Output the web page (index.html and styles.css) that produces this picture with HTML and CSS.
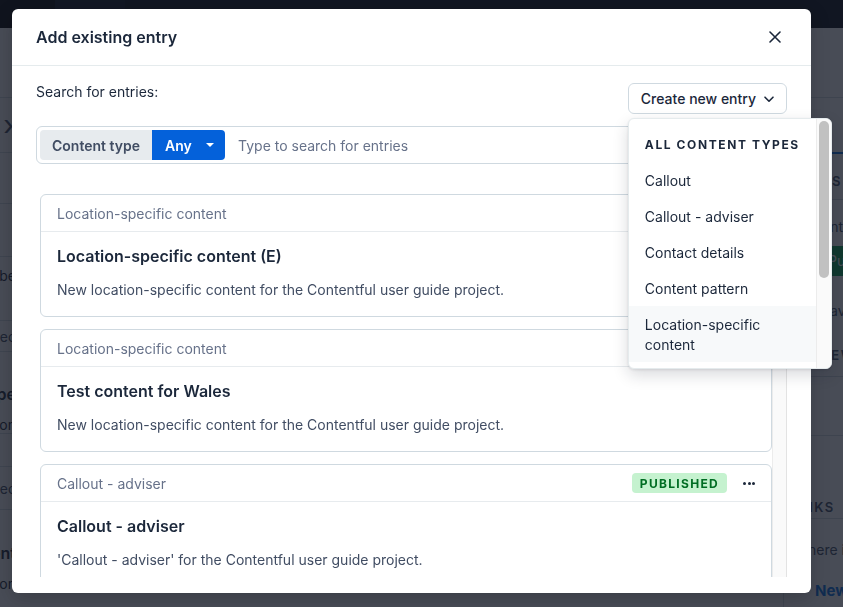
FILE: index.html
```html
<!DOCTYPE html>
<html lang="en">
<head>
<meta charset="utf-8">
<title>Add existing entry</title>
<link rel="stylesheet" href="styles.css">
</head>
<body>
<div class="page">
  <header class="topnav">
    <div class="nav-brand"></div>
    <div class="nav-section"></div>
    <div class="nav-rest"></div>
  </header>
  <div class="workspace">
    <aside class="bg-left">
      <div class="bg-row h70"></div>
      <div class="bg-row h55 center"><span class="chev">&#8250;</span></div>
      <div class="bg-row h51"></div>
      <div class="bg-row h53"></div>
      <div class="bg-row h64 top"><span>Describe</span></div>
      <div class="bg-row h31 mid muted"><span>Location-spec</span></div>
      <div class="bg-row h82 stack"><span class="strong">Location-spe</span><span>Common</span></div>
      <div class="bg-row h33"></div>
      <div class="bg-row h43 mid muted"><span>Location-spec</span></div>
      <div class="bg-row h82 stack stack2"><span class="strong">Content</span><span>Common</span></div>
    </aside>
    <main class="bg-main"></main>
    <aside class="bg-right">
      <div class="side-row r70"></div>
      <div class="side-row r56 tabs"></div>
      <div class="side-row r46 head end"><span>STATUS</span></div>
      <div class="side-block status">
        <span class="side-text end-text">Current</span>
        <span class="side-green">Publish</span>
        <span class="side-text saved">Last saved</span>
      </div>
      <div class="side-row r44 head preview"><span>PREVIEW</span></div>
      <div class="side-row r59"></div>
      <div class="side-row r83 head links"><span>LINKS</span></div>
      <div class="side-block info">
        <span class="side-text there">There is</span>
        <span class="side-link">New</span>
      </div>
    </aside>
  </div>
</div>

<div class="overlay">
  <div class="modal" role="dialog" aria-label="Add existing entry">
    <div class="modal-header">
      <h1 class="modal-title">Add existing entry</h1>
      <button class="close-btn" aria-label="Close">
        <svg width="12" height="12" viewBox="0 0 12 12"><path d="M1 1L11 11M11 1L1 11" stroke="#1b273a" stroke-width="1.6" stroke-linecap="round"/></svg>
      </button>
    </div>
    <div class="modal-body">
      <div class="toolbar">
        <span class="search-label">Search for entries:</span>
        <div class="create-wrap">
          <button class="create-btn">Create new entry
            <svg width="12" height="12" viewBox="0 0 12 12"><path d="M2 4.2L6 8.2L10 4.2" fill="none" stroke="#1b273a" stroke-width="1.6" stroke-linecap="round" stroke-linejoin="round"/></svg>
          </button>
          <div class="dropdown">
            <div class="dropdown-list">
              <div class="dropdown-head">ALL CONTENT TYPES</div>
              <div class="dropdown-item">Callout</div>
              <div class="dropdown-item">Callout - adviser</div>
              <div class="dropdown-item">Contact details</div>
              <div class="dropdown-item">Content pattern</div>
              <div class="dropdown-item active">Location-specific content</div>
              <div class="dropdown-item">Page</div>
              <div class="dropdown-item">Quote</div>
            </div>
            <div class="track dropdown-track"><div class="thumb dropdown-thumb"></div></div>
          </div>
        </div>
      </div>

      <div class="search">
        <span class="ct-label">Content type</span>
        <span class="ct-any">Any <span class="caret"></span></span>
        <span class="placeholder">Type to search for entries</span>
      </div>

      <div class="list-frame">
        <div class="list">
          <div class="card">
            <div class="card-head"><span>Location-specific content</span><span class="badge">PUBLISHED</span><span class="dots"><i></i><i></i><i></i></span></div>
            <div class="card-body">
              <div class="card-title">Location-specific content (E)</div>
              <div class="card-desc">New location-specific content for the Contentful user guide project.</div>
            </div>
          </div>
          <div class="card">
            <div class="card-head"><span>Location-specific content</span><span class="badge">PUBLISHED</span><span class="dots"><i></i><i></i><i></i></span></div>
            <div class="card-body">
              <div class="card-title">Test content for Wales</div>
              <div class="card-desc">New location-specific content for the Contentful user guide project.</div>
            </div>
          </div>
          <div class="card">
            <div class="card-head"><span>Callout - adviser</span><span class="badge">PUBLISHED</span><span class="dots"><i></i><i></i><i></i></span></div>
            <div class="card-body">
              <div class="card-title">Callout - adviser</div>
              <div class="card-desc">'Callout - adviser' for the Contentful user guide project.</div>
            </div>
          </div>
        </div>
        <div class="track list-track"><div class="thumb list-thumb"></div></div>
      </div>
    </div>
  </div>
</div>
</body>
</html>
```

FILE: styles.css
```css
* { box-sizing: border-box; margin: 0; padding: 0; }
html, body { width: 100%; height: 100%; }
body {
  font-family: Inter, "Noto Sans", "Liberation Sans", sans-serif;
  color: #1b273a;
  background: #ffffff;
  overflow: hidden;
}
button { font-family: inherit; background: none; border: none; cursor: pointer; color: inherit; }

/* ---------- background page ---------- */
.page { height: 607px; display: flex; flex-direction: column; }
.topnav { height: 28px; display: flex; background: #050a12; flex: none; }
.nav-brand { width: 55px; background: #000000; }
.nav-section { width: 70px; background: #0a121c; }
.nav-rest { flex: 1; }
.workspace { flex: 1; display: flex; min-height: 0; }

.bg-left { width: 16px; overflow: hidden; display: flex; flex-direction: column; flex: none; }
.bg-row {
  display: flex; justify-content: flex-end; white-space: nowrap;
  border-bottom: 1px solid #d3dce0; font-size: 14px; color: #1b273a; flex: none;
}
.bg-row.center { align-items: center; }
.bg-row.top { padding-top: 10px; }
.bg-row.mid { align-items: center; }
.bg-row.muted { color: #414d63; }
.bg-row.stack { flex-direction: column; align-items: flex-end; padding-top: 16px; gap: 12px; }
.bg-row.stack2 { padding-top: 14px; border-bottom: none; }
.bg-row .strong { font-weight: 600; font-size: 16px; }
.chev { font-size: 28px; color: #414d63; line-height: 1; margin-right: 2px; }
.h70 { height: 70px; } .h55 { height: 55px; } .h51 { height: 51px; } .h53 { height: 53px; }
.h64 { height: 64px; } .h31 { height: 31px; } .h82 { height: 82px; } .h33 { height: 33px; } .h43 { height: 43px; }

.bg-main { flex: 1; }

.bg-right {
  width: 60px; flex: none; overflow: hidden; border-left: 1px solid #d3dce0;
  display: flex; flex-direction: column; white-space: nowrap;
}
.side-row { flex: none; border-bottom: 1px solid #d3dce0; display: flex; align-items: center; }
.r70 { height: 70px; } .r56 { height: 56px; } .r46 { height: 46px; } .r44 { height: 44px; } .r59 { height: 59px; } .r83 { height: 83px; }
.side-row.tabs { border-bottom: 2px solid #036fe3; }
.side-row.head span { font-size: 13px; font-weight: 600; letter-spacing: 1.5px; color: #414d63; }
.side-row.end { justify-content: flex-end; align-items: flex-end; padding: 0 1px 10px 0; }
.side-row.preview { padding-left: 2px; }
.side-row.links { align-items: flex-end; padding: 0 0 3px 5px; }
.side-block { display: flex; flex-direction: column; }
.side-block.status { padding: 17px 0 12px 0; }
.side-text { font-size: 14px; line-height: 20px; color: #414d63; }
.end-text { align-self: flex-end; }
.side-green { display: block; height: 30px; margin: 9px 0 0 34px; background: #00a54d; color: #ffffff; font-size: 14px; line-height: 30px; padding-left: 10px; }
.saved { margin: 25px 0 0 7px; }
.side-block.info { padding: 21px 0 0 0; }
.there { margin-left: 15px; }
.side-link { font-size: 15px; font-weight: 700; line-height: 20px; color: #036fe3; margin: 21px 0 0 31px; }

/* ---------- overlay + modal ---------- */
.overlay {
  position: fixed; inset: 0;
  background: rgba(20, 26, 38, 0.78);
  padding: 9px 0 0 12px;
}
.modal {
  width: 799px; height: 584px; background: #ffffff; border-radius: 6px;
  display: flex; flex-direction: column;
  box-shadow: 0 6px 20px rgba(0, 0, 0, 0.2);
}
.modal-header {
  height: 57px; flex: none; display: flex; align-items: center; justify-content: space-between;
  padding: 0 26px 0 24px; border-bottom: 1px solid #e5ebed;
}
.modal-title { font-size: 16px; font-weight: 600; color: #1b273a; line-height: 24px; }
.close-btn { width: 20px; height: 20px; display: flex; align-items: center; justify-content: center; }

.modal-body { flex: 1; min-height: 0; display: flex; flex-direction: column; padding: 16px 24px 16px 24px; }
.toolbar { display: flex; justify-content: space-between; align-items: flex-start; height: 32px; flex: none; }
.search-label { font-size: 14px; line-height: 20px; color: #1b273a; }

.create-wrap { position: relative; margin-top: 1px; }
.create-btn {
  height: 31px; padding: 0 11px 0 12px; border: 1px solid #cfd9e0; border-radius: 6px;
  display: flex; align-items: center; gap: 7px; font-size: 14px; font-weight: 500; color: #1b273a;
  background: #ffffff;
}

/* dropdown menu over the list */
.dropdown {
  position: absolute; top: 35px; left: 0; width: 204px; height: 251px; z-index: 5;
  display: flex;
  background: #ffffff; border: 1px solid #e5ebed; border-radius: 6px;
  box-shadow: 0 6px 16px rgba(17, 27, 43, 0.16), 0 1px 3px rgba(17, 27, 43, 0.1);
  overflow: hidden;
}
.dropdown-list { flex: 1; min-width: 0; overflow: hidden; padding-top: 7px; }
.dropdown-head {
  height: 36px; display: flex; align-items: center; padding: 0 16px;
  font-size: 12px; font-weight: 700; letter-spacing: 1.6px; color: #1b273a;
}
.dropdown-item { padding: 9px 16px 7px; font-size: 14px; line-height: 20px; color: #1b273a; }
.dropdown-item.active { background: #f7f9fa; }

/* scrollbars */
.track { width: 15px; flex: none; background: #fafafa; border-left: 1px solid #ececec; padding: 2px 2px 0 2px; }
.thumb { background: #c1c1c1; border-radius: 5px; }
.dropdown-thumb { height: 157px; }
.list-track { border-right: 1px solid #e3e3e3; }
.list-thumb { height: 150px; }

.search {
  margin-top: 12px; height: 38px; flex: none; display: flex; align-items: center;
  border: 1px solid #cfd9e0; border-radius: 6px; padding: 3px;
}
.ct-label {
  height: 30px; display: flex; align-items: center; padding: 0 12px;
  background: #e7ebee; border-radius: 4px 0 0 4px;
  font-size: 14px; font-weight: 600; color: #414d63;
}
.ct-any {
  height: 30px; width: 73px; display: flex; align-items: center; justify-content: space-between;
  padding: 0 11px 0 13px; background: #0461da; border-radius: 0 4px 4px 0;
  font-size: 14px; font-weight: 600; color: #ffffff;
}
.caret { width: 0; height: 0; border-left: 4px solid transparent; border-right: 4px solid transparent; border-top: 4px solid #ffffff; }
.placeholder { padding-left: 13px; font-size: 14px; color: #67728a; }

.list-frame { margin-top: 16px; flex: 1; min-height: 0; display: flex; }
.list { flex: 1; min-width: 0; overflow: hidden; padding: 14px 0 0 4px; }

.card { border: 1px solid #cfd9e0; border-radius: 6px; margin-bottom: 12px; }
.card-head {
  height: 37px; display: flex; align-items: center; padding: 0 16px;
  border-bottom: 1px solid #e7ebee; font-size: 14px; color: #67728a;
}
.badge {
  margin-left: auto; height: 20px; display: flex; align-items: center; padding: 0 8px;
  background: #c5f2cf; color: #006d23; border-radius: 4px;
  font-size: 12px; font-weight: 700; letter-spacing: 1.3px;
}
.dots { margin-left: 16px; width: 12px; display: flex; justify-content: space-between; }
.dots i { width: 3px; height: 3px; border-radius: 50%; background: #1b273a; display: block; }
.card-body { padding: 12px 16px 16px; }
.card-title { font-size: 16px; font-weight: 600; line-height: 24px; color: #1b273a; }
.card-desc { margin-top: 12px; font-size: 14px; line-height: 20px; color: #414d63; }
```
